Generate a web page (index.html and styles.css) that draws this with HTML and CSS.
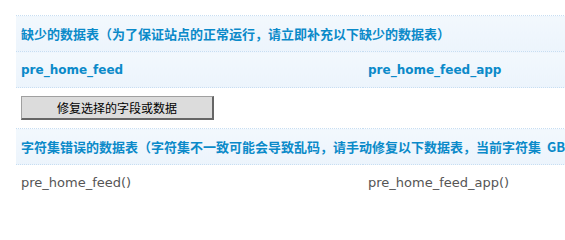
FILE: index.html
```html
<!DOCTYPE html>
<html>
<head>
<meta charset="utf-8">
<link rel="stylesheet" href="styles.css">
</head>
<body>
<div class="page">
  <table class="tb">
    <tr class="hd"><th colspan="2" class="cjk">缺少的数据表（为了保证站点的正常运行，请立即补充以下缺少的数据表）</th></tr>
    <tr class="hd last"><th>pre_home_feed</th><th>pre_home_feed_app</th></tr>
  </table>
  <div class="btnrow"><button class="btn">修复选择的字段或数据</button></div>
  <table class="tb">
    <tr class="hd last"><th colspan="2" class="cjk">字符集错误的数据表（字符集不一致可能会导致乱码，请手动修复以下数据表，当前字符集&nbsp; GBK）</th></tr>
    <tr class="plain"><td>pre_home_feed()</td><td>pre_home_feed_app()</td></tr>
  </table>
</div>
</body>
</html>
```
FILE: styles.css
```css
html, body { margin: 0; padding: 0; background: #fff; }
html { overflow: hidden; }
body { overflow: hidden; font-family: "DejaVu Sans", "Noto Sans CJK SC", sans-serif; }
.page { padding: 15px 0 0 16px; width: 694px; }
.tb { width: 694px; border-collapse: collapse; table-layout: fixed; }
.tb th, .tb td { text-align: left; padding: 0 5px; height: 35px; white-space: nowrap; width: 50%; }
.hd th {
  background: linear-gradient(to bottom, #f2f8fd, #ecf4fc);
  border-top: 1px dotted #c7def2;
  color: #0b8ac9;
  font-size: 12px;
  font-weight: bold;
}
.hd.last th { border-bottom: 1px dotted #c7def2; }
.hd th.cjk { font-size: 13px; font-family: "Noto Sans CJK SC", "DejaVu Sans", sans-serif; }
.plain td { color: #555; font-size: 13px; }
.btnrow { padding: 8px 0 8px 5px; display: flex; }
.btn {
  width: 193px; height: 24px; padding: 0;
  background: #dcdcdc;
  border-style: solid; border-width: 1px 2px 2px 1px;
  border-color: #a0a0a0 #666 #666 #a0a0a0;
  font-family: "Noto Sans CJK SC", sans-serif; font-size: 12px; color: #000;
}
```
